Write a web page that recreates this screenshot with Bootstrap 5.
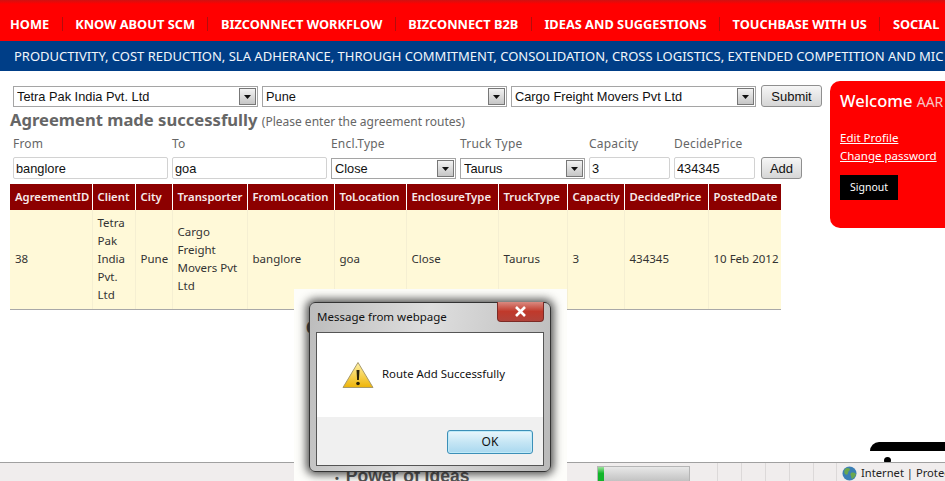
<!DOCTYPE html>
<html lang="en">
<head>
    <meta charset="UTF-8">
    <meta name="viewport" content="width=device-width, initial-scale=1.0">
    <title>BizConnect</title>
    <link href="https://cdn.jsdelivr.net/npm/bootstrap@5.3.0/dist/css/bootstrap.min.css" rel="stylesheet">
    <style>
        body {
            height: 481px;
            overflow: hidden;
            background-color: #fff;
            font-family: "Noto Sans", Tahoma, sans-serif;
            position: relative;
        }
        .top-menu {
            height: 41px;
            background: linear-gradient(#d01212 0, #ff0000 4px);
            padding-top: 7px;
            padding-left: 10px;
            white-space: nowrap;
            overflow: hidden;
        }
        .top-menu a {
            color: #fff;
            font-weight: 700;
            font-size: 12.8px;
            line-height: 20px;
            text-decoration: none;
        }
        .top-menu .sep {
            width: 1px;
            height: 14px;
            background-color: #b30d0d;
            margin: 0 12.5px;
            flex: none;
        }
        .tagline {
            height: 30px;
            line-height: 30px;
            background-color: #003e87;
            color: #f2f6fb;
            font-size: 13px;
            padding-left: 14px;
            white-space: nowrap;
            overflow: hidden;
        }
        .left-side {
            width: 830px;
            flex: none;
            padding: 15px 0 0 10px;
        }
        .pick-row {
            padding-left: 3px;
            gap: 4px;
            height: 22px;
        }
        .old-select {
            appearance: none;
            -webkit-appearance: none;
            border: 1px solid #a5a5a5;
            border-radius: 0;
            height: 21px;
            padding: 0 20px 0 3px;
            font-family: "Liberation Sans", Arial, sans-serif;
            font-size: 12.8px;
            color: #111;
            background-color: #fff;
            background-image: url("data:image/svg+xml,%3Csvg xmlns='http://www.w3.org/2000/svg' width='17' height='17'%3E%3Cdefs%3E%3ClinearGradient id='g' x2='0' y2='1'%3E%3Cstop offset='0' stop-color='%23f4f4f4'/%3E%3Cstop offset='1' stop-color='%23c4c4c4'/%3E%3C/linearGradient%3E%3C/defs%3E%3Crect x='.5' y='.5' width='16' height='16' fill='url(%23g)' stroke='%23777'/%3E%3Cpath d='M5 7h7l-3.500 4z' fill='%23111'/%3E%3C/svg%3E");
            background-repeat: no-repeat;
            background-position: right 1px center;
        }
        .pick-row .old-select {
            width: 245px;
        }
        .grey-btn {
            font-family: "Liberation Sans", Arial, sans-serif;
            font-size: 13px;
            line-height: 1;
            color: #111;
            padding: 0;
            height: 22px;
            border: 1px solid #8f8f8f;
            border-radius: 3px;
            background: linear-gradient(#f6f6f6, #d6d6d6);
        }
        .submit-btn {
            width: 61px;
            margin: -1px 0 0 1px;
        }
        .agree-title {
            color: #666;
            font-size: 16.6px;
            font-weight: 700;
            line-height: 24px;
            margin: 0;
            white-space: nowrap;
        }
        .agree-title span {
            font-size: 12px;
            font-weight: 400;
        }
        .route-grid {
            display: grid;
            grid-template-columns: 155px 155px 125px 125px 81px 81px 42px;
            column-gap: 4px;
            padding-left: 3px;
        }
        .route-grid label {
            color: #666;
            font-size: 12px;
            letter-spacing: .2px;
            line-height: 16px;
            margin: 2px 0 5px;
        }
        .route-grid .form-control {
            height: 22px;
            min-height: 0;
            font-family: "Liberation Sans", Arial, sans-serif;
            font-size: 12.8px;
            color: #111;
            padding: 0 2px;
            border: 1px solid #d2d2d2;
            border-radius: 2px;
        }
        .route-grid .old-select {
            width: 100%;
            margin-top: 1px;
        }
        .route-grid .grey-btn {
            margin-left: 2px;
            width: 41px;
        }
        .deal-table {
            table-layout: fixed;
            width: 771px;
            margin: 5px 0 0;
            border-collapse: collapse;
            font-size: 11.5px;
        }
        .deal-table col:nth-child(1) { width: 82px; }
        .deal-table col:nth-child(2) { width: 43px; }
        .deal-table col:nth-child(3) { width: 37px; }
        .deal-table col:nth-child(4) { width: 75px; }
        .deal-table col:nth-child(5) { width: 87px; }
        .deal-table col:nth-child(6) { width: 72px; }
        .deal-table col:nth-child(7) { width: 92px; }
        .deal-table col:nth-child(8) { width: 69px; }
        .deal-table col:nth-child(9) { width: 57px; }
        .deal-table col:nth-child(10) { width: 84px; }
        .deal-table col:nth-child(11) { width: 73px; }
        .deal-table th {
            background-color: #8c0000;
            color: #f7eaea;
            font-size: 11.3px;
            font-weight: 600;
            height: 26px;
            padding: 0 0 0 5px;
            border-left: 1px solid #fff;
            border-bottom: 0;
            white-space: nowrap;
            overflow: hidden;
            vertical-align: middle;
        }
        .deal-table td {
            background-color: #fff9d8;
            color: #333;
            line-height: 18px;
            height: 99px;
            padding: 0 0 0 5px;
            border-left: 1px solid #f5efd2;
            border-bottom: 1px solid #a8a8a8;
            vertical-align: middle;
        }
        .deal-table th:first-child,
        .deal-table td:first-child {
            border-left: 0;
        }
        .hidden-line {
            color: #444;
            font-family: "Liberation Sans", Arial, sans-serif;
            font-size: 17.5px;
            font-weight: 700;
        }
        .welcome-box {
            margin-top: 10px;
            width: 115px;
            height: 147px;
            background-color: #f00;
            color: #fff;
            border-radius: 10px 0 0 10px;
            padding: 9px 0 0 10px;
            white-space: nowrap;
            overflow: hidden;
        }
        .welcome-box .hello {
            font-size: 16.5px;
            font-weight: 500;
            line-height: 22px;
            margin-bottom: 16px;
        }
        .welcome-box .hello span {
            font-size: 14px;
            font-weight: 400;
            color: #f6c4c4;
        }
        .welcome-box a {
            display: block;
            color: #fff;
            font-size: 11.5px;
            line-height: 18px;
        }
        .signout-btn {
            background-color: #000;
            color: #fff;
            border: 0;
            border-radius: 0;
            width: 58px;
            height: 25px;
            margin-top: 10px;
            padding: 0;
            font-size: 10.5px;
        }
        .status-bar {
            position: absolute;
            left: 0;
            right: 0;
            bottom: 0;
            height: 19px;
            background-color: #f0eded;
            border-top: 1px solid #a0a0a0;
            font-size: 11.2px;
            color: #222;
        }
        .load-bar {
            position: absolute;
            left: 597px;
            top: 3px;
            width: 93px;
            height: 17px;
            border: 1px solid #b5b5b5;
            border-bottom: 0;
            background: linear-gradient(#e8e8e8, #bdbdbd);
        }
        .load-bar i {
            display: block;
            width: 6px;
            height: 100%;
            background: linear-gradient(#9be29b, #12b52a 40%);
        }
        .status-cell {
            position: absolute;
            top: 0;
            width: 1px;
            height: 19px;
            background-color: #dcd9d9;
        }
        .cell-a { left: 717px; }
        .cell-b { left: 741px; }
        .cell-c { left: 765px; }
        .cell-d { left: 789px; }
        .cell-e { left: 813px; }
        .cell-f { left: 836px; }
        .zone-text {
            position: absolute;
            left: 842px;
            top: 2px;
            display: flex;
            align-items: center;
            gap: 4px;
            white-space: nowrap;
        }
        .side-tab {
            position: absolute;
            left: 870px;
            top: 442px;
            width: 75px;
            height: 20px;
            background: linear-gradient(#000 0, #000 9px, #fff 9px);
            border-radius: 9px 0 0 0;
        }
        .side-tab i {
            position: absolute;
            left: 14px;
            top: 15px;
            width: 7px;
            height: 7px;
            border-radius: 50%;
            background-color: #000;
        }
        .dialog-halo {
            position: absolute;
            left: 294px;
            top: 289px;
            width: 273px;
            height: 192px;
            background-color: #fdfdfa;
            overflow: hidden;
        }
        .dialog-halo .power-line {
            position: absolute;
            left: 41px;
            top: 174px;
            color: #555;
            white-space: nowrap;
        }
        .power-line small {
            font-size: 11px;
            margin-right: 7px;
        }
        .dialog-halo .under-word {
            position: absolute;
            left: 12px;
            top: 26px;
        }
        .win-dialog {
            position: absolute;
            left: 15px;
            top: 13px;
            width: 242px;
            height: 170px;
            background: linear-gradient(100deg, #bcbcbc, #dedede 45%, #b9b9b9);
            border: 1px solid #333;
            border-radius: 6px;
            box-shadow: 0 0 9px 3px rgba(30, 30, 30, 0.75);
            padding: 29px 6px 5px;
        }
        .win-title {
            position: absolute;
            left: 7px;
            top: 5px;
            font-size: 11.5px;
            line-height: 18px;
            color: #111;
        }
        .win-close {
            position: absolute;
            right: 6px;
            top: -1px;
            width: 47px;
            height: 20px;
            border: 1px solid #7c2a25;
            border-top: 0;
            border-radius: 0 0 4px 4px;
            background: linear-gradient(#d98a80, #c0392b 50%, #b1433a);
        }
        .win-body {
            height: 100%;
            background-color: #fff;
            border: 1px solid #555;
            display: flex;
            flex-direction: column;
        }
        .win-msg {
            height: 84px;
            padding: 28px 0 0 25px;
            gap: 8px;
            font-size: 11.4px;
            color: #111;
        }
        .win-msg span {
            margin-top: 4px;
        }
        .win-foot {
            flex: 1;
            background-color: #f0f0f0;
            padding: 13px 10px 0 0;
        }
        .ok-btn {
            width: 86px;
            height: 24px;
            padding: 0;
            font-size: 12px;
            line-height: 1;
            color: #111;
            border: 1px solid #3c8fb8;
            border-radius: 3px;
            background: linear-gradient(#eaf6fc, #c6e6f5 50%, #a9d8ef);
            box-shadow: inset 0 0 0 1px #bfeaf8;
        }
    </style>
</head>
<body>
    <nav class="top-menu d-flex align-items-center">
        <a href="#">HOME</a><span class="sep"></span>
        <a href="#">KNOW ABOUT SCM</a><span class="sep"></span>
        <a href="#">BIZCONNECT WORKFLOW</a><span class="sep"></span>
        <a href="#">BIZCONNECT B2B</a><span class="sep"></span>
        <a href="#">IDEAS AND SUGGESTIONS</a><span class="sep"></span>
        <a href="#">TOUCHBASE WITH US</a><span class="sep"></span>
        <a href="#">SOCIAL</a>
    </nav>
    <div class="tagline">PRODUCTIVITY, COST REDUCTION, SLA ADHERANCE, THROUGH COMMITMENT, CONSOLIDATION, CROSS LOGISTICS, EXTENDED COMPETITION AND MIC</div>

    <div class="d-flex">
        <div class="left-side">
            <div class="pick-row d-flex align-items-start">
                <select class="old-select"><option>Tetra Pak India Pvt. Ltd</option></select>
                <select class="old-select"><option>Pune</option></select>
                <select class="old-select"><option>Cargo Freight Movers Pvt Ltd</option></select>
                <button type="button" class="btn grey-btn submit-btn">Submit</button>
            </div>
            <h5 class="agree-title">Agreement made successfully <span>(Please enter the agreement routes)</span></h5>
            <div class="route-grid">
                <label>From</label>
                <label>To</label>
                <label>Encl.Type</label>
                <label>Truck Type</label>
                <label>Capacity</label>
                <label>DecidePrice</label>
                <span></span>
                <input class="form-control" value="banglore">
                <input class="form-control" value="goa">
                <select class="old-select"><option>Close</option></select>
                <select class="old-select"><option>Taurus</option></select>
                <input class="form-control" value="3">
                <input class="form-control" value="434345">
                <button type="button" class="btn grey-btn">Add</button>
            </div>
            <table class="table deal-table">
                <colgroup>
                    <col><col><col><col><col><col><col><col><col><col><col>
                </colgroup>
                <thead>
                    <tr>
                        <th>AgreementID</th><th>Client</th><th>City</th><th>Transporter</th><th>FromLocation</th><th>ToLocation</th>
                        <th>EnclosureType</th><th>TruckType</th><th>Capactiy</th><th>DecidedPrice</th><th>PostedDate</th>
                    </tr>
                </thead>
                <tbody>
                    <tr>
                        <td>38</td><td>Tetra Pak India Pvt. Ltd</td><td>Pune</td><td>Cargo Freight Movers Pvt Ltd</td><td>banglore</td><td>goa</td>
                        <td>Close</td><td>Taurus</td><td>3</td><td>434345</td><td>10 Feb 2012</td>
                    </tr>
                </tbody>
            </table>
        </div>
        <aside class="welcome-box">
            <div class="hello">Welcome <span>AAR</span></div>
            <a href="#">Edit Profile</a>
            <a href="#">Change password</a>
            <button type="button" class="btn signout-btn">Signout</button>
        </aside>
    </div>

    <div class="side-tab"><i></i></div>

    <footer class="status-bar">
        <div class="load-bar"><i></i></div>
        <span class="status-cell cell-a"></span>
        <span class="status-cell cell-b"></span>
        <span class="status-cell cell-c"></span>
        <span class="status-cell cell-d"></span>
        <span class="status-cell cell-e"></span>
        <span class="status-cell cell-f"></span>
        <div class="zone-text">
            <svg width="15" height="15" viewBox="0 0 15 15">
                <circle cx="7.500" cy="7.500" r="7" fill="#3b7fb5"/>
                <path d="M3 3c2-1.500 4-1 5 0 0 2-2 2-2 4s-2 2-3 1-1-3 0-5zM9 7c2-1 4 0 5 1-.5 2-2 4-4 5-1-1-.5-2-1-3s-1-2 0-3z" fill="#6aa84f"/>
            </svg>
            <span>Internet | Protec</span>
        </div>
    </footer>

    <div class="dialog-halo">
        <div class="hidden-line under-word">C</div>
        <div class="hidden-line power-line"><small>&bull;</small>Power of Ideas</div>
        <div class="win-dialog">
            <span class="win-title">Message from webpage</span>
            <div class="win-close d-flex align-items-center justify-content-center">
                <svg width="13" height="11" viewBox="0 0 13 11">
                    <path d="M2 1l9 9M11 1l-9 9" stroke="#fff" stroke-width="2.600"/>
                </svg>
            </div>
            <div class="win-body">
                <div class="win-msg d-flex align-items-start">
                    <svg width="32" height="28" viewBox="0 0 32 28" class="flex-shrink-0">
                        <defs>
                            <linearGradient id="warnFill" x1="0" y1="0" x2="0" y2="1">
                                <stop offset="0" stop-color="#fff2a8"/>
                                <stop offset="1" stop-color="#eeb408"/>
                            </linearGradient>
                        </defs>
                        <path d="M16 1.500L31 26.500H1z" fill="url(#warnFill)" stroke="#a89a6a" stroke-linejoin="round"/>
                        <path d="M14.500 9h3l-.6 10h-1.800z" fill="#2a2208"/>
                        <circle cx="16" cy="22.500" r="1.800" fill="#2a2208"/>
                    </svg>
                    <span>Route Add Successfully</span>
                </div>
                <div class="win-foot d-flex justify-content-end align-items-start">
                    <button type="button" class="btn ok-btn">OK</button>
                </div>
            </div>
        </div>
    </div>

    <script src="https://cdn.jsdelivr.net/npm/bootstrap@5.3.0/dist/js/bootstrap.bundle.min.js"></script>
</body>
</html>
